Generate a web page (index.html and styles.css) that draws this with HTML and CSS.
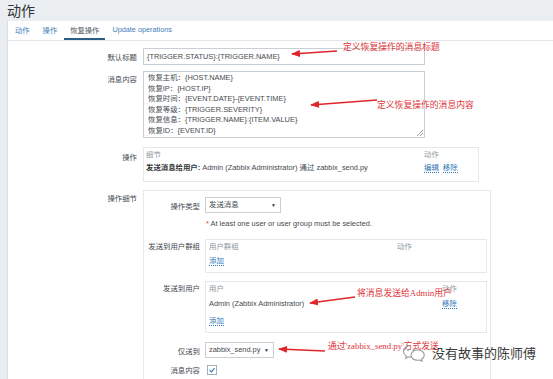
FILE: index.html
```html
<!DOCTYPE html>
<html lang="zh">
<head>
<meta charset="utf-8">
<title>动作</title>
<link rel="stylesheet" href="styles.css">
</head>
<body>
<div class="page">
  <header class="page-head"><h1 class="title">动作</h1></header>
  <main class="panel">
    <nav class="tabs">
      <a class="tab">动作</a>
      <a class="tab">操作</a>
      <a class="tab active">恢复操作</a>
      <a class="tab">Update operations</a>
    </nav>
    <div class="form">
      <div class="row r-subject">
        <div class="lbl">默认标题</div>
        <div class="field input">{TRIGGER.STATUS}:{TRIGGER.NAME}</div>
      </div>
      <div class="row r-message">
        <div class="lbl">消息内容</div>
        <div class="field textarea">
          <div>恢复主机：{HOST.NAME}</div>
          <div>恢复IP：{HOST.IP}</div>
          <div>恢复时间：{EVENT.DATE}-{EVENT.TIME}</div>
          <div>恢复等级：{TRIGGER.SEVERITY}</div>
          <div>恢复信息：{TRIGGER.NAME}:{ITEM.VALUE}</div>
          <div>恢复ID：{EVENT.ID}</div>
          <span class="grip"></span>
        </div>
      </div>
      <div class="row r-ops">
        <div class="lbl">操作</div>
        <div class="box ops">
          <div class="trow head"><span>细节</span><span>动作</span></div>
          <div class="trow"><span><b>发送消息给用户:</b> Admin (Zabbix Administrator) 通过 zabbix_send.py</span><span class="links"><a class="lnk">编辑</a> <a class="lnk">移除</a></span></div>
        </div>
      </div>
      <div class="row r-details">
        <div class="lbl">操作细节</div>
        <div class="box details">
          <div class="irow i-type">
            <div class="ilbl">操作类型</div>
            <div class="select s-type">发送消息<span class="caret">▼</span></div>
          </div>
          <div class="irow i-hint">
            <div class="ilbl"></div>
            <div class="hint"><span class="req">*</span> At least one user or user group must be selected.</div>
          </div>
          <div class="irow i-groups">
            <div class="ilbl">发送到用户群组</div>
            <div class="box sub groups">
              <div class="trow head"><span>用户群组</span><span>动作</span></div>
              <div class="trow"><span><a class="lnk">添加</a></span><span></span></div>
            </div>
          </div>
          <div class="irow i-users">
            <div class="ilbl">发送到用户</div>
            <div class="box sub users">
              <div class="trow head"><span>用户</span><span>动作</span></div>
              <div class="trow"><span>Admin (Zabbix Administrator)</span><span><a class="lnk">移除</a></span></div>
              <div class="trow"><span><a class="lnk">添加</a></span><span></span></div>
            </div>
          </div>
          <div class="irow i-media">
            <div class="ilbl">仅送到</div>
            <div class="select s-media">zabbix_send.py<span class="caret">▼</span></div>
          </div>
          <div class="irow i-check">
            <div class="ilbl">消息内容</div>
            <div class="check"><svg viewBox="0 0 10 10" width="10" height="10"><path d="M2 5.2 L4.2 7.4 L8.2 2.6" fill="none" stroke="#2b78c2" stroke-width="1.3"/></svg></div>
          </div>
        </div>
      </div>
    </div>
  </main>

  <div class="annotations">
    <svg class="arrows" width="553" height="379" viewBox="0 0 553 379">
      <defs>
        <marker id="ah" markerWidth="9" markerHeight="7" refX="8" refY="3.5" orient="auto" markerUnits="userSpaceOnUse">
          <path d="M0,0 L9,3.5 L0,7 z" fill="#e0262b"/>
        </marker>
      </defs>
      <line x1="337" y1="51" x2="292" y2="54" stroke="#e0262b" stroke-width="1.6" marker-end="url(#ah)"/>
      <line x1="377" y1="100" x2="311" y2="105" stroke="#e0262b" stroke-width="1.6" marker-end="url(#ah)"/>
      <line x1="355" y1="297" x2="310" y2="303" stroke="#e0262b" stroke-width="1.6" marker-end="url(#ah)"/>
      <line x1="325" y1="351" x2="279" y2="349" stroke="#e0262b" stroke-width="1.6" marker-end="url(#ah)"/>
    </svg>
    <span class="note n1">定义恢复操作的消息标题</span>
    <span class="note n2">定义恢复操作的消息内容</span>
    <span class="note n3">将消息发送给Admin用户</span>
    <span class="note n4">通过'zabbix_send.py'方式发送</span>
    <div class="watermark">
      <svg class="wm-logo" width="24" height="18" viewBox="0 0 24 18">
        <path d="M9 1.5 C4.6 1.5 1.5 4.2 1.5 7.3 C1.5 9.2 2.6 10.8 4.3 11.9 L3.7 14.2 L6.3 12.8 C7.2 13.1 8.1 13.2 9 13.2" fill="none" stroke="#9a9a9a" stroke-width="1.1"/>
        <path d="M15.5 6 C11.7 6 9 8.4 9 11.2 C9 14 11.7 16.3 15.5 16.3 C16.3 16.3 17 16.2 17.7 16 L20 17.2 L19.5 15.2 C21.2 14.2 22.3 12.8 22.3 11.2 C22.3 8.4 19.4 6 15.5 6 Z" fill="none" stroke="#9a9a9a" stroke-width="1.1"/>
        <circle cx="6" cy="6" r="0.9" fill="#9a9a9a"/>
        <circle cx="11.5" cy="6" r="0.9" fill="#9a9a9a"/>
      </svg>
      <span class="wm-text">没有故事的陈师傅</span>
    </div>
  </div>
</div>
</body>
</html>
```
FILE: styles.css
```css
* { box-sizing: border-box; }
html, body { margin: 0; padding: 0; }
body {
  width: 553px;
  height: 379px;
  overflow: hidden;
  background: #ebeef0;
  font-family: "Liberation Sans", "Noto Sans CJK SC", sans-serif;
  font-size: 7.4px;
  color: #454a4f;
}
.page { position: relative; width: 553px; height: 379px; }

.page-head { height: 21px; display: flex; align-items: center; padding-left: 7px; }
.title { margin: 0; font-size: 14px; font-weight: normal; color: #2c3236; line-height: 1; }

.panel {
  margin-left: 7px;
  height: 358px;
  background: #fff;
  border-left: 1px solid #dadfe2;
}

.tabs {
  height: 20px;
  display: flex;
  gap: 1px;
  padding-left: 1px;
  border-bottom: 1px solid #e2e6e9;
}
.tab {
  display: flex;
  align-items: center;
  padding: 0 6px;
  color: #3f7fb8;
  font-size: 7.3px;
  border-bottom: 2px solid transparent;
}
.tab.active { color: #555b60; border-bottom-color: #2b5d87; }

.form { padding-top: 7px; }
.row { display: flex; gap: 6px; }
.lbl {
  width: 129px;
  text-align: right;
  color: #454a4f;
  flex: none;
}
.r-subject { align-items: center; }
.r-message { margin-top: 6px; }
.r-message .lbl { padding-top: 2px; }
.r-ops { margin-top: 9px; }
.r-ops .lbl { padding-top: 4px; }
.r-details { margin-top: 8px; }
.r-details .lbl { padding-top: 2px; }

.field {
  border: 1px solid #c9d0d5;
  color: #454a4f;
  background: #fff;
}
.input {
  width: 282px;
  height: 17px;
  line-height: 15px;
  padding-left: 3px;
}
.textarea {
  position: relative;
  width: 282px;
  height: 67px;
  padding: 1px 4px;
  line-height: 10.6px;
}
.grip {
  position: absolute;
  right: 1px;
  bottom: 1px;
  width: 6px;
  height: 6px;
  background: linear-gradient(135deg, transparent 45%, #999 45%, #999 55%, transparent 55%, transparent 70%, #999 70%, #999 80%, transparent 80%);
}

.box { border: 1px solid #e6e9eb; background: #fff; }
.ops { width: 336px; height: 35px; padding: 2px 3px 0 2px; }
.trow { display: grid; grid-template-columns: 1fr 51px; line-height: 10px; }
.ops .trow + .trow { margin-top: 3px; }
.trow.head { color: #8d979d; }
b { font-weight: bold; color: #2f3438; }
.lnk { color: #2f76b6; border-bottom: 1px dotted #2f76b6; }
.links .lnk { margin-right: 2px; }

.details { width: 348px; height: 200px; padding: 6px 0 0 0; border-bottom: none; }
.irow { display: flex; gap: 5px; }
.ilbl { width: 56px; flex: none; text-align: right; }
.i-type { align-items: center; }
.select {
  position: relative;
  height: 16px;
  line-height: 14px;
  border: 1px solid #c9d0d5;
  padding-left: 3px;
  color: #454a4f;
}
.s-type { width: 76px; }
.s-media { width: 69px; }
.caret { position: absolute; right: 4px; top: 0; font-size: 5px; color: #333; }
.i-hint { margin-top: 5px; line-height: 12px; }
.hint { color: #454a4f; padding-left: 1px; }
.req { color: #e04040; }

.i-groups { margin-top: 9px; }
.i-groups .ilbl, .i-users .ilbl { padding-top: 3px; line-height: 10px; }
.sub { width: 282px; padding: 2px 3px 0 3px; }
.groups { height: 34px; }
.groups .trow { grid-template-columns: 1fr 86px; }
.groups .trow + .trow { margin-top: 4px; }
.i-users { margin-top: 8px; }
.users { height: 52px; }
.users .trow { grid-template-columns: 1fr 41px; }
.users .trow + .trow { margin-top: 5px; }
.users .trow + .trow + .trow { margin-top: 7px; }

.i-media { margin-top: 9px; align-items: center; }
.i-check { margin-top: 6px; align-items: center; }
.check {
  margin-left: 2px;
  width: 10px;
  height: 10px;
  border: 1px solid #9fb0ba;
  display: flex;
  align-items: center;
  justify-content: center;
}
.check svg { display: block; width: 8px; height: 8px; }

.annotations { position: absolute; left: 0; top: 0; width: 553px; height: 379px; pointer-events: none; }
.arrows { position: absolute; left: 0; top: 0; }
.note {
  position: absolute;
  color: #e0363b;
  font-family: "Liberation Serif", "Noto Sans CJK SC", serif;
  font-size: 8.8px;
  line-height: 12px;
  white-space: nowrap;
}
.n1 { left: 343px; top: 41px; }
.n2 { left: 377px; top: 99px; }
.n3 { left: 357px; top: 287px; }
.n4 { left: 328px; top: 340px; }

.watermark {
  position: absolute;
  left: 402px;
  top: 344px;
  display: flex;
  align-items: center;
  gap: 6px;
}
.wm-text {
  font-family: "Noto Sans CJK SC", sans-serif;
  font-size: 13px;
  color: #3a3a3a;
  line-height: 18px;
}
```
